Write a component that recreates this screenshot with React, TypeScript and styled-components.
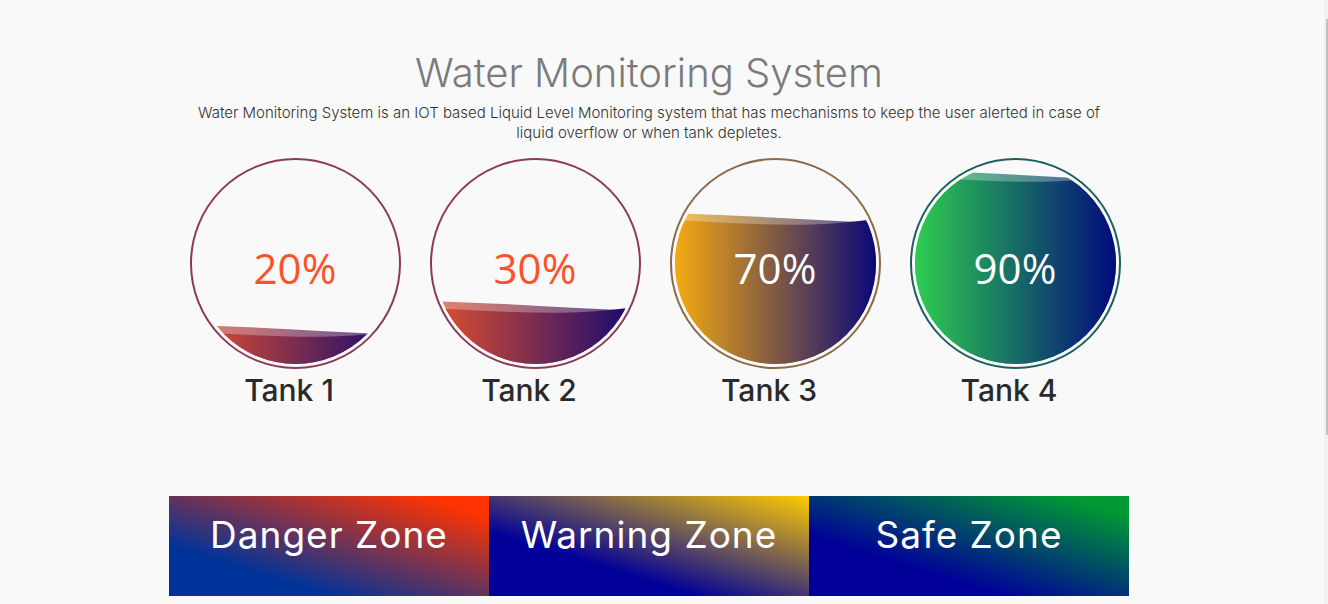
import styled, { createGlobalStyle } from 'styled-components'

const GlobalStyle = createGlobalStyle`
  html, body {
    margin: 0;
    padding: 0;
    background: #f9f9f9;
  }
`

// thin scrollbar drawn on the right edge, as in the screenshot
const ScrollTrack = styled.div`
  position: fixed;
  top: 0;
  right: 0;
  width: 4px;
  height: 100vh;
  background: #f1f1f1;
  display: flex;
  justify-content: flex-end;
  padding-top: 19px;
  box-sizing: border-box;
`

const ScrollThumb = styled.div`
  width: 2px;
  height: 416px;
  background: #c1c1c1;
`

const Page = styled.main`
  width: 960px;
  margin: 0 auto;
  padding: 48px 30px 0 0;
  font-family: Inter, "Liberation Sans", sans-serif;
`

const Title = styled.h1`
  margin: 0;
  text-align: center;
  font-size: 40px;
  font-weight: 300;
  color: #7b7b7b;
  line-height: normal;
`

const Intro = styled.p`
  margin: 6px auto 0;
  max-width: 940px;
  text-align: center;
  font-size: 15px;
  line-height: 20px;
  font-weight: 300;
  color: #333;
`

const TankRow = styled.section`
  display: grid;
  grid-template-columns: repeat(4, 240px);
  margin-top: 15px;
`

const TankCard = styled.div`
  display: flex;
  flex-direction: column;
  align-items: center;
`

const Gauge = styled.div`
  display: grid;
  width: 211px;
  height: 211px;
  margin-left: 12px;

  > * {
    grid-area: 1 / 1;
  }
`

const Percent = styled.span<{ $color: string }>`
  place-self: center;
  padding-top: 8px;
  font-family: "Open Sans", sans-serif;
  font-size: 42px;
  color: ${p => p.$color};
`

const TankName = styled.h2`
  margin: 3px 0 0;
  font-size: 30px;
  font-weight: 500;
  color: #2a2a2a;
  line-height: normal;
`

const ZoneRow = styled.section`
  display: flex;
  margin-top: 88px;
`

const Zone = styled.div<{ $bg: string }>`
  flex: 1;
  height: 100px;
  box-sizing: border-box;
  padding-top: 16px;
  text-align: center;
  font-size: 37px;
  letter-spacing: 1px;
  color: #fff;
  line-height: normal;
  background: ${p => p.$bg};
`

type TankData = {
  name: string
  pct: number
  from: string
  to: string
  border: string
  text: string
  level: number
}

const tanks: TankData[] = [
  { name: 'Tank 1', pct: 20, from: '#e0502f', to: '#140870', border: '#8c3a5a', text: '#ff5126', level: 176 },
  { name: 'Tank 2', pct: 30, from: '#e0502f', to: '#140870', border: '#8c3a5a', text: '#ff5126', level: 152 },
  { name: 'Tank 3', pct: 70, from: '#f5aa10', to: '#0a0878', border: '#8b6a48', text: '#fff', level: 64 },
  { name: 'Tank 4', pct: 90, from: '#2dcd50', to: '#020a7c', border: '#1d5e5e', text: '#fff', level: 21 },
]

function Tank ({ t, id }: { t: TankData, id: number }) {
  const y = t.level
  return <TankCard>
    <Gauge>
      <svg width="211" height="211" viewBox="0 0 211 211">
        <defs>
          <clipPath id={`clip${id}`}>
            <circle cx="105.5" cy="105.5" r="100.5" />
          </clipPath>
          <linearGradient id={`grad${id}`} gradientUnits="userSpaceOnUse" x1="5" y1="0" x2="206" y2="0">
            <stop offset="0" stopColor={t.from} />
            <stop offset="1" stopColor={t.to} />
          </linearGradient>
        </defs>
        <circle cx="105.5" cy="105.5" r="104.5" fill="none" stroke={t.border} strokeWidth="2" />
        <g clipPath={`url(#clip${id})`}>
          <path d={`M0 ${y - 9} C70 ${y - 7} 140 ${y - 2} 211 ${y + 1} V211 H0 Z`} fill={`url(#grad${id})`} opacity="0.7" />
          <path d={`M0 ${y - 2} C70 ${y + 1} 140 ${y + 8} 211 ${y - 4} V211 H0 Z`} fill={`url(#grad${id})`} />
        </g>
      </svg>
      <Percent $color={t.text}>{t.pct}%</Percent>
    </Gauge>
    <TankName>{t.name}</TankName>
  </TankCard>
}

export default function App () {
  return <>
    <GlobalStyle />
    <Page>
      <Title>Water Monitoring System</Title>
      <Intro>
        Water Monitoring System is an IOT based Liquid Level Monitoring system that has mechanisms to keep the user alerted in case of<br />
        liquid overflow or when tank depletes.
      </Intro>
      <TankRow>
        {tanks.map((t, i) => <Tank key={t.name} t={t} id={i} />)}
      </TankRow>
      <ZoneRow>
        <Zone $bg="linear-gradient(to top right, #003399 25%, #ff3300 90%)">Danger Zone</Zone>
        <Zone $bg="linear-gradient(to top right, #000099 32%, #ffcc00 100%)">Warning Zone</Zone>
        <Zone $bg="linear-gradient(to top right, #000099 30%, #009933 90%)">Safe Zone</Zone>
      </ZoneRow>
    </Page>
    <ScrollTrack><ScrollThumb /></ScrollTrack>
  </>
}
